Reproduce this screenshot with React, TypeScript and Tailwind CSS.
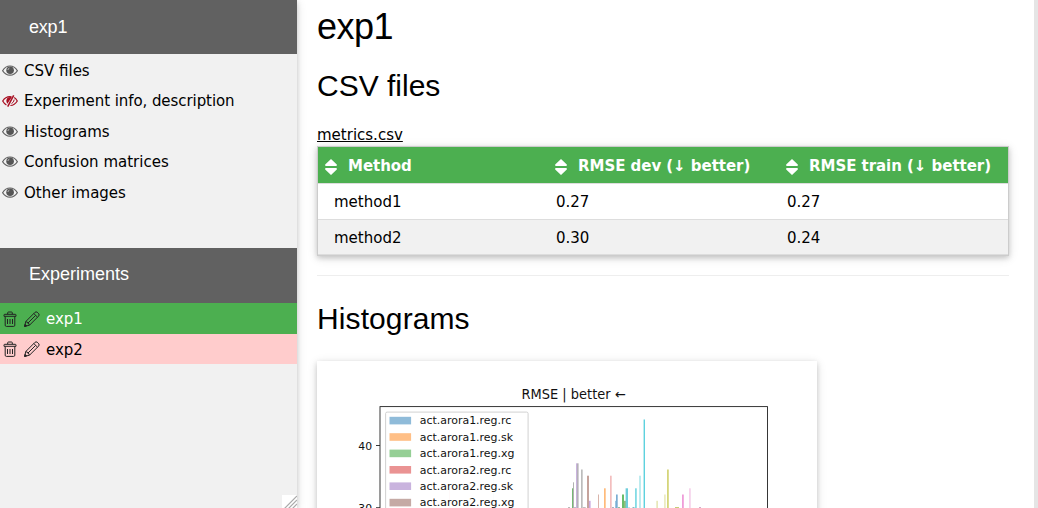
import React from "react";

const sans = "font-['DejaVu_Sans',sans-serif]";
const heading = "font-['Liberation_Sans',sans-serif] font-normal";

function Eye() {
  return (
    <svg className="h-4 w-4 shrink-0" viewBox="0 0 16 16" fill="none">
      <path d="M.6 7.7C4.4 1.4 11.6 1.4 15.4 7.7C11.6 13.6 4.4 13.6 .6 7.7Z" stroke="#616161" strokeWidth="1.2" />
      <circle cx="8.1" cy="7.3" r="3.8" fill="#555" />
      <path d="M5.9 6.9Q6.1 5.5 7.4 5.1" stroke="#ddd" strokeWidth=".8" />
    </svg>
  );
}

function EyeOff() {
  return (
    <svg className="h-4 w-4 shrink-0" viewBox="0 0 16 16" fill="none" stroke="#a80f22" strokeWidth="1.2">
      <path d="M9.6 3.8Q4 2.8 .7 8Q2.2 10.8 4.4 11.9M12.2 4.6Q14 5.8 15.3 8Q12.6 12.4 8.4 12.5" />
      <path d="M9.7 4.3C5.4 3 2.8 7.2 5.4 10.8Z" fill="#a80f22" stroke="none" />
      <path d="M11.7 2.3L5.7 13.6" strokeWidth="1.5" />
      <path d="M12.2 6.6Q12 9.3 9.5 10.6" strokeWidth="1" />
    </svg>
  );
}

function Trash() {
  return (
    <svg className="h-4 w-4 shrink-0" viewBox="0 0 16 16" fill="none" stroke="#222" strokeWidth="1">
      <path d="M2 5.3V4Q2 3.3 2.8 3.3H13.2Q14 3.3 14 4V5.3ZM5.7 3.2V1.7Q5.7 1 6.5 1H9.5Q10.3 1 10.3 1.7V3.2M3.2 5.4V14.2Q3.2 15.4 4.4 15.4H11.6Q12.8 15.4 12.8 14.2V5.4" />
      <path d="M5.5 8V13M8 8V13M10.5 8V13" />
    </svg>
  );
}

function Pencil() {
  return (
    <svg className="h-4 w-4 shrink-0" viewBox="0 0 16 16" fill="none" stroke="#222" strokeWidth="1">
      <path d="M.6 15.4L1.8 10.5L10.8 1.5Q12 .3 13.2 1.2L14.8 2.8Q15.7 4 14.5 5.2L5.5 14.2ZM1.8 10.5Q4.8 11.2 5.5 14.2M9.8 2.5L13.5 6.2M11.6 4.4L3.7 12.3" />
      <path d="M.6 15.4L1.1 13.4L2.6 14.9Z" fill="#222" />
    </svg>
  );
}

function Sort() {
  return (
    <svg className="h-4 w-3 shrink-0" viewBox="0 0 12 16" fill="#fff">
      <path d="M6 0L11.8 5.6Q12.2 7 11 7H1Q-.2 7 .2 5.6ZM1 9H11Q12.2 9 11.8 10.4L6 16L.2 10.4Q-.2 9 1 9Z" />
    </svg>
  );
}

const sections = [
  ["CSV files", true],
  ["Experiment info, description", false],
  ["Histograms", true],
  ["Confusion matrices", true],
  ["Other images", true],
] as const;

const legend = [
  ["act.arora1.reg.rc", "#8fbbd9"],
  ["act.arora1.reg.sk", "#ffbf86"],
  ["act.arora1.reg.xg", "#95cf95"],
  ["act.arora2.reg.rc", "#ea9393"],
  ["act.arora2.reg.sk", "#c9b3de"],
  ["act.arora2.reg.xg", "#c5aaa5"],
];

// x, width, top, colour
const bars: [number, number, number, string][] = [
  [132, 1, 129, "#fbdede"],
  [176, 1, 102, "#e5f6f8"],
  [256, 1, 121.3, "#b2b2b2"],
  [255, 1, 127.3, "#74b874"],
  [259, 1, 102.3, "#c9b3de"],
  [260, 1.6, 102.3, "#b5b0b8"],
  [264, 1.7, 108.5, "#bcbcbc"],
  [270, 2, 114.7, "#c5a39c"],
  [272, 1.6, 139.8, "#c9a7df"],
  [281, 1, 133.5, "#d9b4aa"],
  [287, 1.7, 127.3, "#ffbb7b"],
  [293, 1.7, 114.7, "#f3bebe"],
  [298, 1, 139.8, "#9bc6e2"],
  [299, 1.7, 133.5, "#79add2"],
  [305, 2, 133.5, "#69bd69"],
  [307, 2, 139.8, "#92bd78"],
  [308.6, 2.4, 127.3, "#6ecddb"],
  [318, 1.8, 127.3, "#83dbe5"],
  [322, 2, 114.7, "#bdebef"],
  [326, 1, 58.5, "#bdebef"],
  [327, 1, 58.5, "#5dd2df"],
  [339.5, 1.2, 139.8, "#dede9b"],
  [347, 1.8, 133.5, "#ebebc3"],
  [350, 1.8, 108.5, "#d5d57b"],
  [365, 1.8, 133.5, "#ef9dd9"],
  [372, 1.8, 127.3, "#f6d3ec"],
  [251, 2, 146, "#bbb"],
  [257, 2, 146, "#c4b8cf"],
  [265.7, 3, 146, "#c3bebf"],
  [295, 2, 146, "#a7b4c4"],
  [301, 2, 146, "#94bfa0"],
  [311, 2, 146, "#bdebef"],
  [315.5, 2, 146, "#83bdc5"],
  [358, 4, 146, "#c7cd77"],
  [382, 2, 146, "#d7a9c9"],
];

function Chart() {
  return (
    <svg className="block h-[375px] w-[500px]" viewBox="0 0 500 375">
      {bars.map(([x, w, y, c], i) => (
        <rect key={i} x={x} y={y} width={w} height={333 - y} fill={c} />
      ))}
      <rect x="63" y="45.6" width="387.5" height="289" fill="none" stroke="#222" strokeWidth=".9" />
      <rect x="68.6" y="51.1" width="142.5" height="260" rx="1.5" fill="#fff" fillOpacity=".8" stroke="#ccc" strokeWidth=".9" />
      <g className="font-['DejaVu_Sans',sans-serif]" fill="#111" fontSize="10.85">
        <text x="204.6" y="38" fontSize="13.5" textLength="104" lengthAdjust="spacingAndGlyphs">RMSE | better ←</text>
        <text x="41.3" y="88.6">40</text>
        <text x="41.3" y="150.6">30</text>
        {legend.map(([name, color], i) => (
          <g key={name}>
            <rect x="72.5" y={55.8 + i * 16.4} width="21.6" height="7.6" fill={color} />
            <text x="102.8" y={63.4 + i * 16.4} fontSize="10.95">{name}</text>
          </g>
        ))}
      </g>
      <path d="M59 84.5H63M59 146.7H63" stroke="#222" strokeWidth=".9" />
    </svg>
  );
}

export default function App() {
  return (
    <div className={`flex h-[508px] w-[1038px] overflow-hidden bg-white text-[15px] leading-[22.5px] text-black ${sans}`}>
      <aside className="relative z-10 flex w-[297px] shrink-0 flex-col bg-[#f1f1f1] shadow-[0_2px_5px_0_rgba(0,0,0,0.16),0_2px_10px_0_rgba(0,0,0,0.12)]">
        <header className="flex h-[54px] shrink-0 items-center bg-[#616161] pl-[29px] text-white">
          <h5 className={`text-lg tracking-[-0.2px] ${heading}`}>exp1</h5>
        </header>
        <nav className="flex h-[194px] shrink-0 flex-col pt-[1.3px]">
          {sections.map(([label, visible]) => (
            <a key={label} className="flex h-[30.5px] shrink-0 items-center gap-1.5 pl-0.5">
              {visible ? <Eye /> : <EyeOff />}
              <span className={visible ? "pt-[0.8px]" : "tracking-[-0.07px]"}>{label}</span>
            </a>
          ))}
        </nav>
        <header className="flex h-[55px] shrink-0 items-center bg-[#616161] pb-[3px] pl-[29px] text-white">
          <h5 className={`text-lg ${heading}`}>Experiments</h5>
        </header>
        <a className="flex h-[31px] shrink-0 items-center gap-1.5 bg-[#4caf50] pl-0.5 text-white">
          <Trash />
          <Pencil />
          <span className="pt-px">exp1</span>
        </a>
        <a className="flex h-[30px] shrink-0 items-center gap-1.5 bg-[#ffcccc] pl-0.5">
          <Trash />
          <Pencil />
          <span className="pt-[2px]">exp2</span>
        </a>
        <svg className="mt-auto h-[13px] w-[15px] self-end bg-white" viewBox="0 0 15 13" stroke="#aaa" strokeWidth="1.2">
          <path d="M2 14L15 1M6 14L15 5M10 14L15 9" />
        </svg>
      </aside>
      <main className="h-full flex-1 overflow-hidden pl-5">
        <div className="w-[692px]">
          <h1 className={`text-[36px] leading-[54px] tracking-[-0.5px] ${heading}`}>exp1</h1>
          <h2 className={`mt-[9px] text-[30px] leading-[45px] ${heading}`}>CSV files</h2>
          <div className="mt-[15px] h-[23px] pt-px">
            <a className="underline">metrics.csv</a>
          </div>
          <table className="h-[110px] w-[692px] table-fixed border-separate border-spacing-0 border border-[#ccc] shadow-[0_2px_5px_0_rgba(0,0,0,0.16),0_2px_10px_0_rgba(0,0,0,0.12)]">
            <colgroup>
              <col className="w-[222px]" />
              <col className="w-[231px]" />
              <col className="w-[237px]" />
            </colgroup>
            <thead>
              <tr className="h-9 bg-[#4caf50] text-left text-white">
                {["Method", "RMSE dev (↓ better)", "RMSE train (↓ better)"].map((label, i) => (
                  <th key={label} className={`p-0 font-bold whitespace-nowrap ${i ? "pl-[15px]" : "pl-[7px]"}`}>
                    <div className="flex items-center gap-[11px] pt-[3px]">
                      <Sort />
                      <span className="tracking-[-0.04px]">{label}</span>
                    </div>
                  </th>
                ))}
              </tr>
            </thead>
            <tbody>
              <tr className="h-[37px]">
                {["method1", "0.27", "0.27"].map((v, i) => (
                  <td key={i} className="border-y border-[#ddd] p-0 pt-[1.5px] pl-4">{v}</td>
                ))}
              </tr>
              <tr className="h-[35px] bg-[#f1f1f1]">
                {["method2", "0.30", "0.24"].map((v, i) => (
                  <td key={i} className="border-b border-[#ddd] p-0 pt-[2.5px] pl-4">{v}</td>
                ))}
              </tr>
            </tbody>
          </table>
          <hr className="mt-[19px] border-0 border-t border-[#eee]" />
          <h2 className={`mt-5 text-[30px] leading-[45px] tracking-[0.1px] ${heading}`}>Histograms</h2>
          <div className="mt-5 w-[500px] bg-white shadow-[0_2px_5px_0_rgba(0,0,0,0.16),0_2px_10px_0_rgba(0,0,0,0.12)]">
            <Chart />
          </div>
        </div>
      </main>
      <div className="w-1 shrink-0 bg-[#e5e5e5]" />
    </div>
  );
}
